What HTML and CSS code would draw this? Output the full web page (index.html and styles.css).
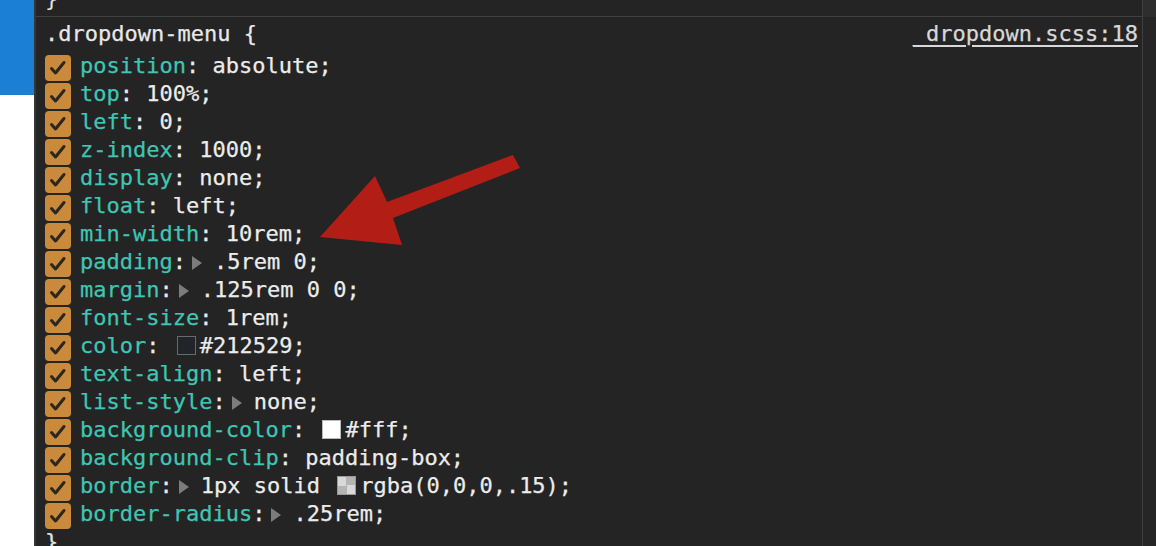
FILE: index.html
```html
<!DOCTYPE html>
<html>
<head>
<meta charset="utf-8">
<link rel="stylesheet" href="styles.css">
</head>
<body>
<div class="side"><div class="side-blue"></div></div>
<div class="panel">
  <div class="main">
    <div class="prev"><div class="prev-line">}</div></div>
    <div class="rule">
      <div class="head">
        <span class="sel">.dropdown-menu {</span>
        <span class="src">_dropdown.scss:18</span>
      </div>
      <div class="row"><span class="cb"><svg viewBox="0 0 26 26"><path d="M6.5 13.5 L10.5 18 L19 7.5"/></svg></span><span class="p">position</span>: absolute;</div>
      <div class="row"><span class="cb"><svg viewBox="0 0 26 26"><path d="M6.5 13.5 L10.5 18 L19 7.5"/></svg></span><span class="p">top</span>: 100%;</div>
      <div class="row"><span class="cb"><svg viewBox="0 0 26 26"><path d="M6.5 13.5 L10.5 18 L19 7.5"/></svg></span><span class="p">left</span>: 0;</div>
      <div class="row"><span class="cb"><svg viewBox="0 0 26 26"><path d="M6.5 13.5 L10.5 18 L19 7.5"/></svg></span><span class="p">z-index</span>: 1000;</div>
      <div class="row"><span class="cb"><svg viewBox="0 0 26 26"><path d="M6.5 13.5 L10.5 18 L19 7.5"/></svg></span><span class="p">display</span>: none;</div>
      <div class="row"><span class="cb"><svg viewBox="0 0 26 26"><path d="M6.5 13.5 L10.5 18 L19 7.5"/></svg></span><span class="p">float</span>: left;</div>
      <div class="row"><span class="cb"><svg viewBox="0 0 26 26"><path d="M6.5 13.5 L10.5 18 L19 7.5"/></svg></span><span class="p">min-width</span>: 10rem;</div>
      <div class="row"><span class="cb"><svg viewBox="0 0 26 26"><path d="M6.5 13.5 L10.5 18 L19 7.5"/></svg></span><span class="p">padding</span>:<span class="tri"></span>.5rem 0;</div>
      <div class="row"><span class="cb"><svg viewBox="0 0 26 26"><path d="M6.5 13.5 L10.5 18 L19 7.5"/></svg></span><span class="p">margin</span>:<span class="tri"></span>.125rem 0 0;</div>
      <div class="row"><span class="cb"><svg viewBox="0 0 26 26"><path d="M6.5 13.5 L10.5 18 L19 7.5"/></svg></span><span class="p">font-size</span>: 1rem;</div>
      <div class="row"><span class="cb"><svg viewBox="0 0 26 26"><path d="M6.5 13.5 L10.5 18 L19 7.5"/></svg></span><span class="p">color</span>: <span class="sw sw-dark"></span>#212529;</div>
      <div class="row"><span class="cb"><svg viewBox="0 0 26 26"><path d="M6.5 13.5 L10.5 18 L19 7.5"/></svg></span><span class="p">text-align</span>: left;</div>
      <div class="row"><span class="cb"><svg viewBox="0 0 26 26"><path d="M6.5 13.5 L10.5 18 L19 7.5"/></svg></span><span class="p">list-style</span>:<span class="tri"></span>none;</div>
      <div class="row"><span class="cb"><svg viewBox="0 0 26 26"><path d="M6.5 13.5 L10.5 18 L19 7.5"/></svg></span><span class="p">background-color</span>: <span class="sw sw-white"></span>#fff;</div>
      <div class="row"><span class="cb"><svg viewBox="0 0 26 26"><path d="M6.5 13.5 L10.5 18 L19 7.5"/></svg></span><span class="p">background-clip</span>: padding-box;</div>
      <div class="row"><span class="cb"><svg viewBox="0 0 26 26"><path d="M6.5 13.5 L10.5 18 L19 7.5"/></svg></span><span class="p">border</span>:<span class="tri"></span>1px solid <span class="sw sw-alpha"></span>rgba(0,0,0,.15);</div>
      <div class="row"><span class="cb"><svg viewBox="0 0 26 26"><path d="M6.5 13.5 L10.5 18 L19 7.5"/></svg></span><span class="p">border-radius</span>:<span class="tri"></span>.25rem;</div>
      <div class="close">}</div>
    </div>
  </div>
  <div class="scroll"><div class="scroll-top"></div></div>
  <svg class="arrow" viewBox="0 0 1156 546" width="1156" height="546"><polygon points="513,155 520,168 393,218 402,245 320,237 375,176 387,202"/></svg>
</div>
</body>
</html>
```
FILE: styles.css
```css
html, body {
  margin: 0;
  height: 546px;
  overflow: hidden;
}
body {
  display: flex;
  background: #ffffff;
  font-family: "DejaVu Sans Mono", "Liberation Mono", monospace;
}
.side {
  width: 34px;
  flex: none;
}
.side-blue {
  height: 95px;
  background: #1a7fd5;
}
.panel {
  flex: 1;
  display: flex;
  background: #242424;
  border-left: 2px solid #363636;
  height: 546px;
  overflow: hidden;
}
.main {
  flex: 1;
  min-width: 0;
}
.prev {
  height: 16px;
  overflow: hidden;
  border-bottom: 1px solid #414141;
  padding-left: 9px;
}
.prev-line {
  font-size: 22px;
  line-height: 28px;
  margin-top: -15px;
  color: #e2e2e2;
}
.rule {
  padding: 3px 4px 0 9px;
  font-size: 22px;
  line-height: 28px;
  color: #ececec;
  white-space: nowrap;
  -webkit-text-stroke: 0.25px currentColor;
}
.head {
  display: flex;
  justify-content: space-between;
  margin-bottom: 4px;
  height: 28px;
}
.sel {
  color: #e8e8e8;
}
.src {
  color: #d8d8d8;
  text-decoration: underline;
  text-decoration-thickness: 2px;
  text-underline-offset: 4px;
}
.row {
  height: 28px;
}
.cb {
  display: inline-block;
  width: 26px;
  height: 26px;
  border-radius: 4px;
  background: #c98a3b;
  margin-right: 9px;
  vertical-align: -8px;
}
.cb svg {
  display: block;
  width: 26px;
  height: 26px;
  fill: none;
  stroke: #2b2620;
  stroke-width: 3;
  stroke-linecap: round;
  stroke-linejoin: round;
}
.p {
  color: #3fc6b4;
}
.tri {
  display: inline-block;
  width: 0;
  height: 0;
  border-top: 7px solid transparent;
  border-bottom: 7px solid transparent;
  border-left: 10px solid #7c7c7c;
  margin: 0 12px 0 6px;
  vertical-align: -1px;
}
.sw {
  display: inline-block;
  width: 17px;
  height: 17px;
  border: 1px solid #6a6a6a;
  margin: 0 4px 0 4px;
  vertical-align: -2px;
}
.sw-dark {
  background: #212529;
}
.sw-white {
  background: #ffffff;
  border-color: #bbbbbb;
}
.sw-alpha {
  border-color: #9a9a9a;
  background: conic-gradient(#b4b4b4 0 25%, #d9d9d9 0 50%, #b4b4b4 0 75%, #d9d9d9 0);
}
.close {
  color: #e2e2e2;
}
.scroll {
  width: 13px;
  flex: none;
  border-left: 1px solid #404040;
  background: #262626;
}
.scroll-top {
  height: 17px;
  background: #2e2e2e;
}
.arrow {
  position: absolute;
  left: 0;
  top: 0;
  pointer-events: none;
}
.arrow polygon {
  fill: #b21e15;
}
```
